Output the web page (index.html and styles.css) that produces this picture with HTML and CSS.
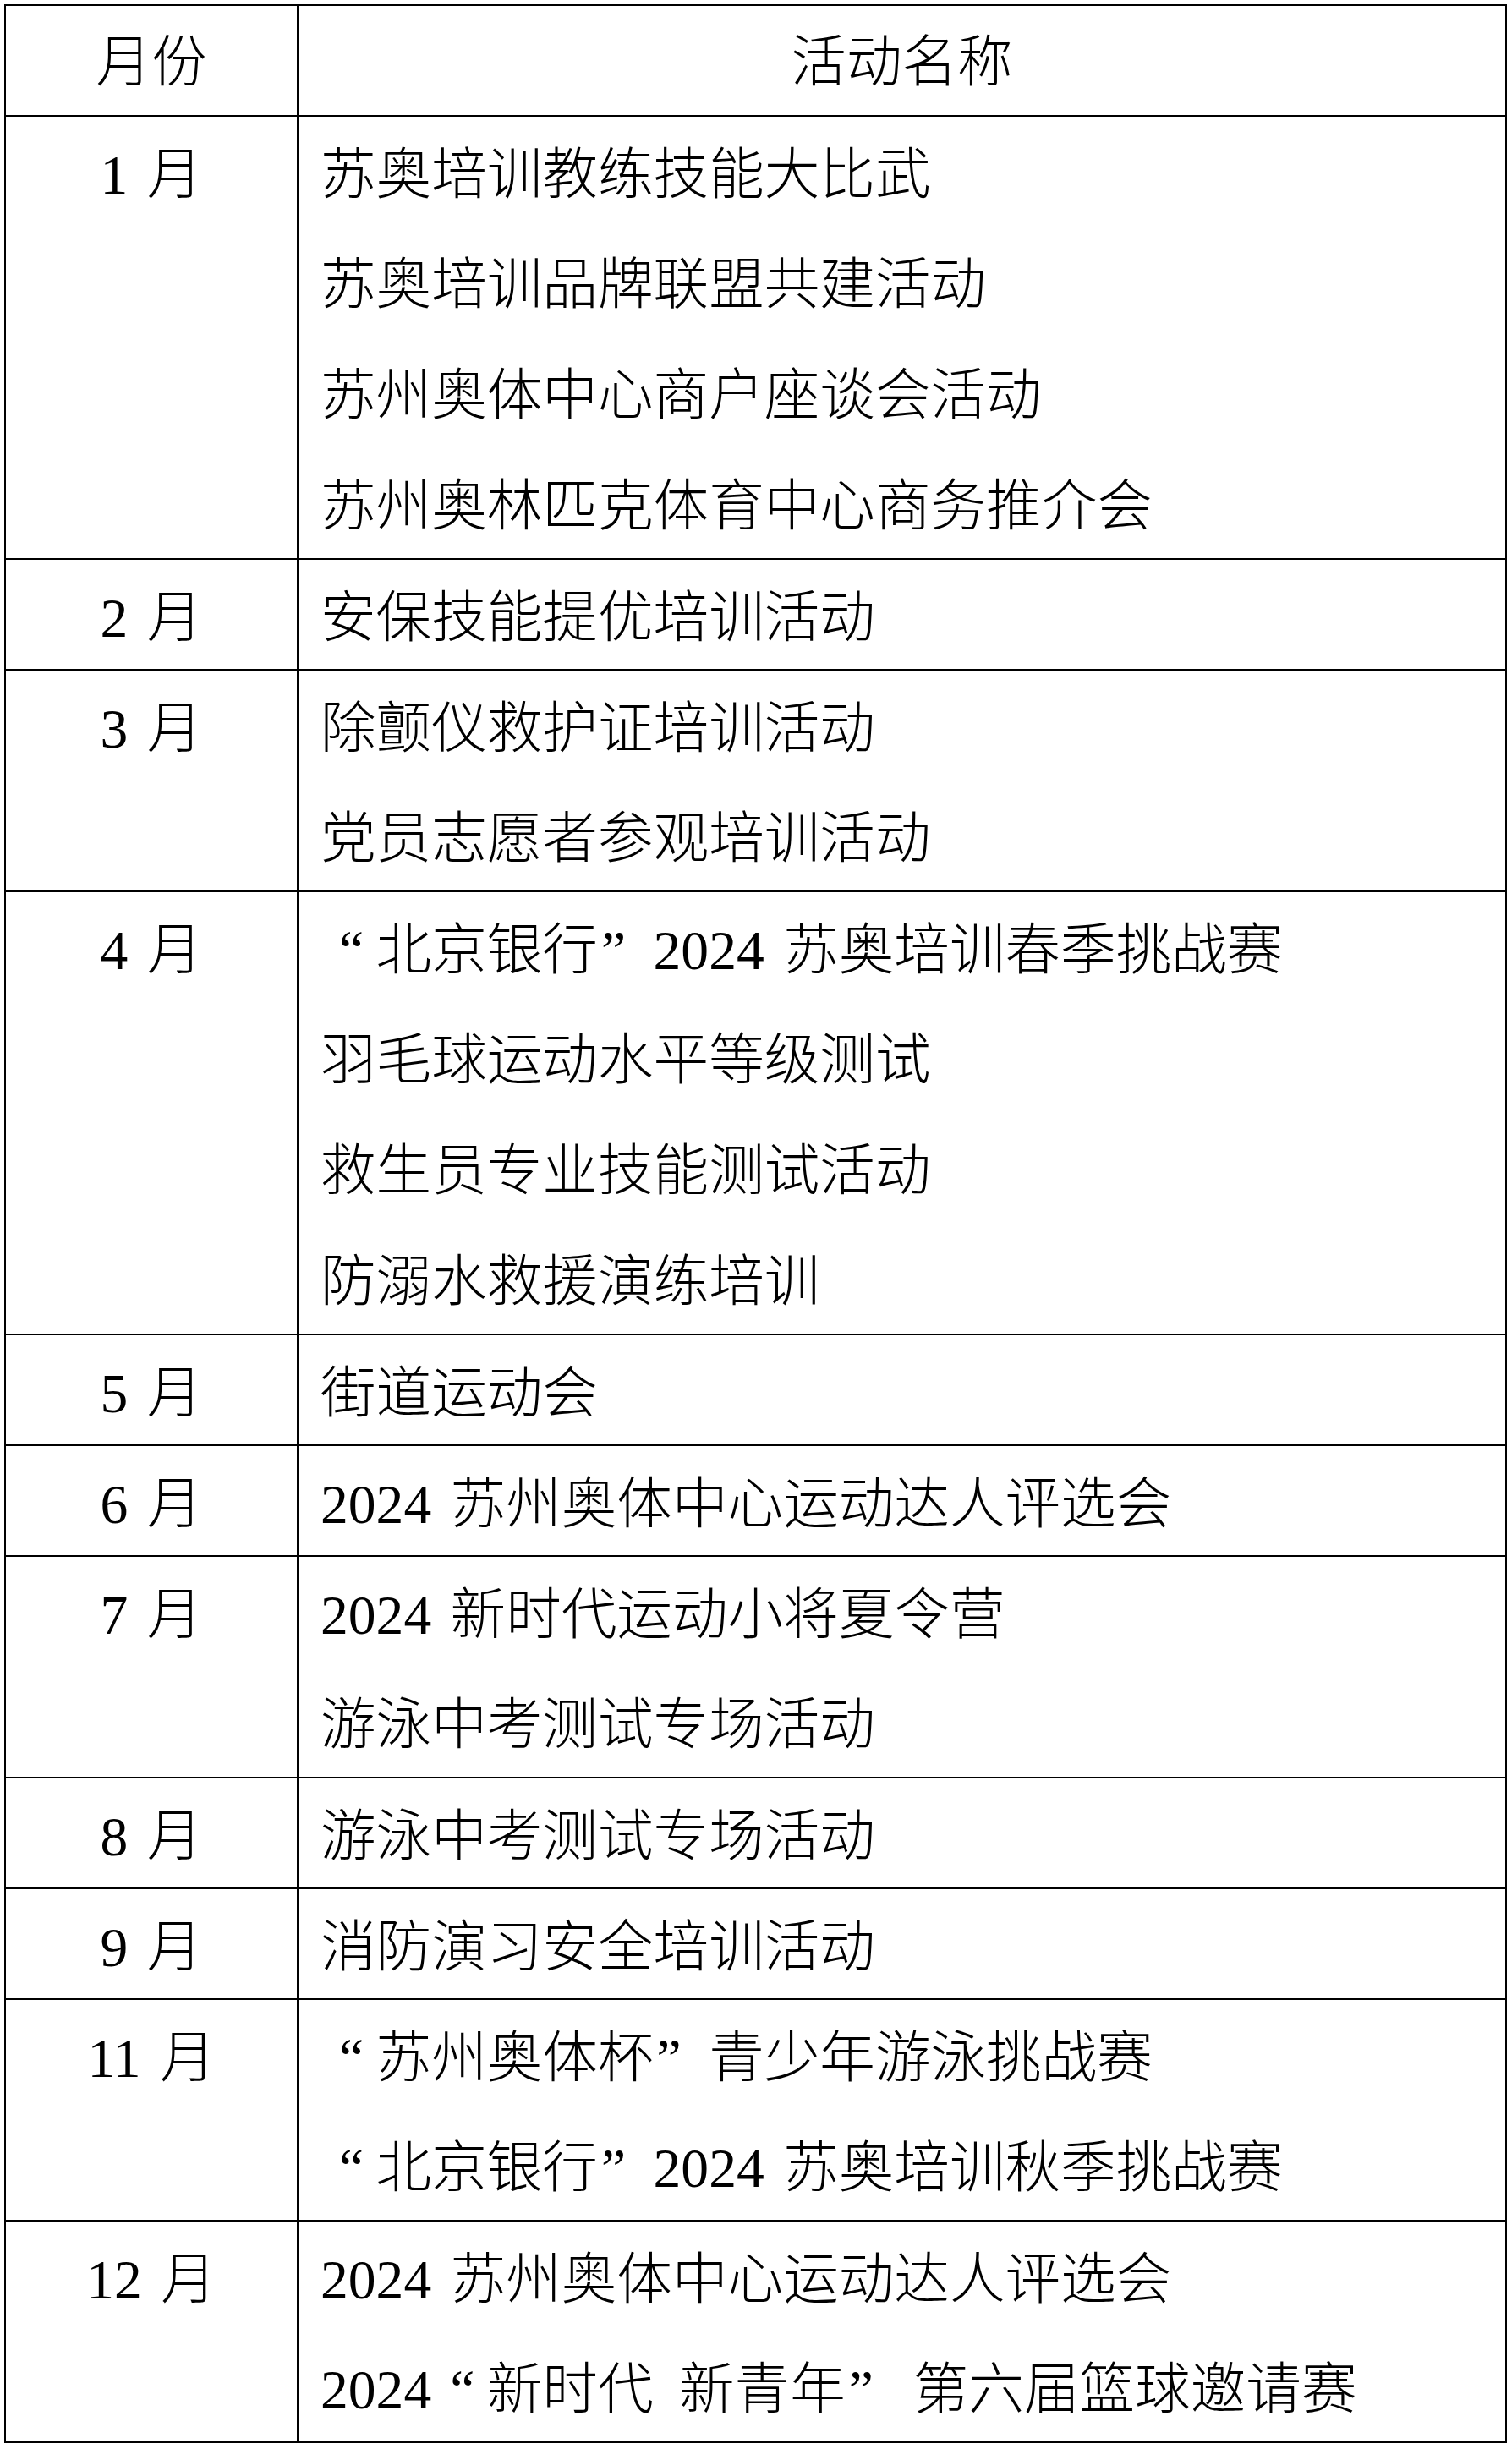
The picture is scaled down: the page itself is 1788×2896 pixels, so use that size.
FILE: index.html
```html
<!DOCTYPE html>
<html lang="zh-CN">
<head>
<meta charset="utf-8">
<title>活动安排</title>
<link rel="stylesheet" href="styles.css">
</head>
<body>
<div class="sheet">
  <div class="cell m head"><div class="ln">月份</div></div>
  <div class="cell c head"><div class="ln">活动名称</div></div>

  <div class="cell m"><div class="ln">1 月</div></div>
  <div class="cell a">
    <div class="ln">苏奥培训教练技能大比武</div>
    <div class="ln">苏奥培训品牌联盟共建活动</div>
    <div class="ln">苏州奥体中心商户座谈会活动</div>
    <div class="ln">苏州奥林匹克体育中心商务推介会</div>
  </div>

  <div class="cell m"><div class="ln">2 月</div></div>
  <div class="cell a">
    <div class="ln">安保技能提优培训活动</div>
  </div>

  <div class="cell m"><div class="ln">3 月</div></div>
  <div class="cell a">
    <div class="ln">除颤仪救护证培训活动</div>
    <div class="ln">党员志愿者参观培训活动</div>
  </div>

  <div class="cell m"><div class="ln">4 月</div></div>
  <div class="cell a">
    <div class="ln"><span class="ql">“</span>北京银行<span class="qr">”</span>2024 苏奥培训春季挑战赛</div>
    <div class="ln">羽毛球运动水平等级测试</div>
    <div class="ln">救生员专业技能测试活动</div>
    <div class="ln">防溺水救援演练培训</div>
  </div>

  <div class="cell m"><div class="ln">5 月</div></div>
  <div class="cell a">
    <div class="ln">街道运动会</div>
  </div>

  <div class="cell m"><div class="ln">6 月</div></div>
  <div class="cell a">
    <div class="ln">2024 苏州奥体中心运动达人评选会</div>
  </div>

  <div class="cell m"><div class="ln">7 月</div></div>
  <div class="cell a">
    <div class="ln">2024 新时代运动小将夏令营</div>
    <div class="ln">游泳中考测试专场活动</div>
  </div>

  <div class="cell m"><div class="ln">8 月</div></div>
  <div class="cell a">
    <div class="ln">游泳中考测试专场活动</div>
  </div>

  <div class="cell m"><div class="ln">9 月</div></div>
  <div class="cell a">
    <div class="ln">消防演习安全培训活动</div>
  </div>

  <div class="cell m"><div class="ln">11 月</div></div>
  <div class="cell a">
    <div class="ln"><span class="ql">“</span>苏州奥体杯<span class="qr">”</span>青少年游泳挑战赛</div>
    <div class="ln"><span class="ql">“</span>北京银行<span class="qr">”</span>2024 苏奥培训秋季挑战赛</div>
  </div>

  <div class="cell m"><div class="ln">12 月</div></div>
  <div class="cell a">
    <div class="ln">2024 苏州奥体中心运动达人评选会</div>
    <div class="ln wide">2024<span class="ql">“</span>新时代 新青年<span class="qr">”</span>第六届篮球邀请赛</div>
  </div>
</div>
</body>
</html>
```

FILE: styles.css
```css
html, body {
  margin: 0;
  padding: 0;
  background: #ffffff;
}

.sheet {
  display: grid;
  grid-template-columns: 346px 1fr;
  width: 1777px;
  margin: 5px 0 0 5px;
  box-sizing: border-box;
  border-top: 2px solid #000;
  border-left: 2px solid #000;
  font-family: "Liberation Serif", "Noto Sans CJK SC", serif;
  font-size: 65.6px;
  font-weight: 300;
  color: #000;
  word-spacing: 6px;
}

.cell {
  box-sizing: border-box;
  border-right: 2px solid #000;
  border-bottom: 2px solid #000;
}

.m,
.c {
  text-align: center;
}

.a {
  padding-left: 26px;
}

.ln {
  box-sizing: border-box;
  height: 131px;
  padding-top: 10px;
  line-height: 121px;
  white-space: nowrap;
}

.ln:first-child {
  height: 129px;
  line-height: 119px;
}

.head .ln {
  padding-top: 5px;
  line-height: 124px;
}

.ql,
.qr {
  display: inline-block;
  width: 65.6px;
  box-sizing: border-box;
  text-align: left;
}

.ql {
  padding-left: 22px;
}

.qr {
  padding-left: 4px;
}

.wide {
  word-spacing: 14px;
}

.wide .qr {
  width: 80px;
}
```
